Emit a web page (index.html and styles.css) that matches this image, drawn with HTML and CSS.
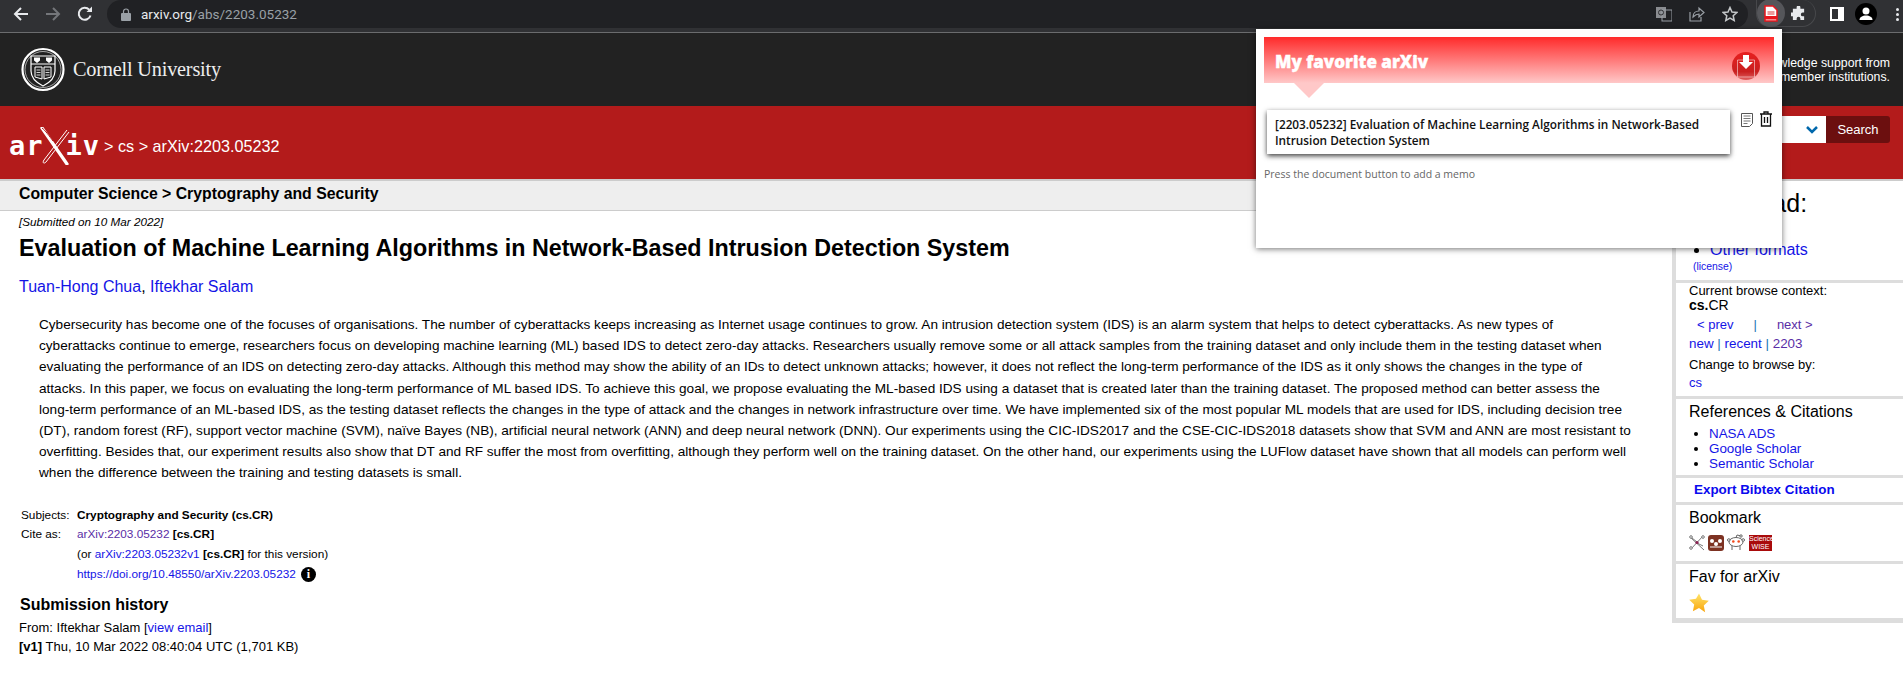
FILE: index.html
```html
<!DOCTYPE html>
<html lang="en">
<head>
    <meta charset="UTF-8">
    <title>[2203.05232] Evaluation of Machine Learning Algorithms in Network-Based Intrusion Detection System</title>
    <link rel="stylesheet" href="styles.css">
</head>
<body>

    <!-- Browser toolbar -->
    <div class="toolbar">
        <svg class="nav-icon" viewBox="0 0 16 16"><path d="M15 8H2M8 2 2 8l6 6" fill="none" stroke="#e8eaed" stroke-width="2"/></svg>
        <svg class="nav-icon" viewBox="0 0 16 16"><path d="M1 8h13M8 2l6 6-6 6" fill="none" stroke="#74767a" stroke-width="2"/></svg>
        <svg class="nav-icon" viewBox="0 0 16 16"><path d="M13.5 9.5A6 6 0 1 1 12.2 3.7" fill="none" stroke="#e8eaed" stroke-width="2"/><path d="M9.5 6H15V.5z" fill="#e8eaed"/></svg>
        <div class="address">
            <svg class="lock" viewBox="0 0 10 13"><path d="M2.5 5V3.5a2.5 2.5 0 0 1 5 0V5" fill="none" stroke="#9aa0a6" stroke-width="1.2"/><rect y="5" width="10" height="8" rx="1" fill="#9aa0a6"/></svg>
            <span class="url">arxiv.org<span class="url-path">/abs/2203.05232</span></span>
            <div class="address-icons">
                <svg class="tool-icon" viewBox="0 0 16 16"><rect x="0" y="1" width="10" height="11" fill="#8a8c90"/><rect x="6" y="4" width="10" height="11" fill="none" stroke="#9aa0a6"/><circle cx="5" cy="6.500" r="2.500" fill="none" stroke="#303134"/></svg>
                <svg class="tool-icon" viewBox="0 0 16 16"><path d="M1 6v9h11v-4" fill="none" stroke="#9aa0a6" stroke-width="1.200"/><path d="M4 11c0-4 3-6 6-6V2l5 4.500-5 4.500V8c-3 0-4 1-6 3z" fill="none" stroke="#9aa0a6" stroke-width="1.200"/></svg>
                <svg class="tool-icon" viewBox="0 0 16 16"><path d="m8 1.500 2 4.500 4.800.500-3.600 3.200 1 4.800L8 12.100 3.800 14.500l1-4.800L1.200 6.500 6 6z" fill="none" stroke="#c4c7c9" stroke-width="1.500"/></svg>
            </div>
        </div>
        <div class="extensions">
            <div class="ext-active">
                <svg class="ext-pdf" viewBox="0 0 14 17"><path d="M1 1h8l4 4v11H1z" fill="#fff" stroke="#e8161d" stroke-width="1.500"/><rect x="3.500" y="6" width="7" height="4" fill="#ee9a9c"/><rect x="1" y="11" width="12" height="3.500" fill="#e8161d"/></svg>
            </div>
            <svg class="puzzle" viewBox="0 0 16 16"><path d="M6 1.500a2 2 0 0 1 4 0V3h4v4h-1.500a2 2 0 0 0 0 4H14v4h-4v-1.500a2 2 0 0 0-4 0V15H2v-4H.5a2 2 0 0 1 0-4H2V3h4z" fill="#e8eaed"/></svg>
        </div>
        <svg class="side-panel" viewBox="0 0 14 14"><rect x="1" y="1" width="12" height="12" fill="none" stroke="#fff" stroke-width="2"/><rect x="8" y="1" width="5" height="12" fill="#fff"/></svg>
        <div class="avatar">
            <svg viewBox="0 0 22 22" width="22" height="22"><circle cx="11" cy="8" r="3.500" fill="#fff"/><path d="M4.500 17c0-3 3-4.500 6.500-4.500s6.500 1.500 6.500 4.500z" fill="#fff"/></svg>
        </div>
        <div class="menu-dots"><i></i><i></i><i></i></div>
    </div>

    <!-- Cornell strip -->
    <div class="cornell">
        <div class="cornell-logo">
            <svg class="seal" viewBox="0 0 44 45">
                <circle cx="22" cy="22.500" r="20.500" fill="none" stroke="#fff" stroke-width="2.200"/>
                <circle cx="22" cy="22.500" r="18" fill="none" stroke="#fff" stroke-width=".6"/>
                <path d="M10 9h24v15c0 7-6 12-12 15-6-3-12-8-12-15z" fill="none" stroke="#fff" stroke-width="1.200"/>
                <path d="M10 17h24" stroke="#fff"/>
                <path d="M13 10.500h6v3l-3 2.500-3-2.500zM25 10.500h6v3l-3 2.500-3-2.500z" fill="#fff"/>
                <path d="M14 20h7v12l-7-2zM30 20h-7v12l7-2z" fill="none" stroke="#fff"/>
                <path d="M15.500 23h4M15.500 25.500h4M15.500 28h4M24.500 23h4M24.500 25.500h4M24.500 28h4" stroke="#fff" stroke-width=".8"/>
            </svg>
            <span class="cornell-name">Cornell University</span>
        </div>
        <p class="support">We gratefully acknowledge support from<br>the Simons Foundation and member institutions.</p>
    </div>

    <!-- Red arXiv strip -->
    <div class="arxiv-bar">
        <div class="arxiv-crumbs">
            <div class="arxiv-logo">
                <span class="logo-text">ar</span>
                <svg class="logo-x" viewBox="0 0 30 38">
                    <path d="M2 1 27 37" stroke="#fff" stroke-width="3.200" stroke-linecap="round"/>
                    <path d="M2 1c3 2 8 9 11 13" stroke="#b31b1b" stroke-width="1" fill="none"/>
                    <path d="M27 3 4 33c-2 3 0 4 2 2L29 5" fill="none" stroke="#fff" stroke-width="1"/>
                </svg>
                <span class="logo-text">iv</span>
            </div>
            <span class="crumb-text">&gt; cs &gt; arXiv:2203.05232</span>
        </div>
        <form class="search">
            <input class="search-input" type="text">
            <div class="search-select">
                <svg viewBox="0 0 12 8" width="12" height="8"><path d="m1 1 5 5 5-5" fill="none" stroke="#0068ac" stroke-width="2.500"/></svg>
            </div>
            <button type="button" class="search-btn">Search</button>
        </form>
    </div>

    <div class="page">
        <div class="main">
            <div class="subject-bar">Computer Science &gt; Cryptography and Security</div>
            <div class="content">
                <div class="dateline">[Submitted on 10 Mar 2022]</div>
                <h1 class="title">Evaluation of Machine Learning Algorithms in Network-Based Intrusion Detection System</h1>
                <div class="authors"><a href="#">Tuan-Hong Chua</a>, <a href="#">Iftekhar Salam</a></div>
                <p class="abstract">Cybersecurity has become one of the focuses of organisations. The number of cyberattacks keeps increasing as Internet usage continues to grow. An intrusion detection system (IDS) is an alarm system that helps to detect cyberattacks. As new types of<br>
                cyberattacks continue to emerge, researchers focus on developing machine learning (ML) based IDS to detect zero-day attacks. Researchers usually remove some or all attack samples from the training dataset and only include them in the testing dataset when<br>
                evaluating the performance of an IDS on detecting zero-day attacks. Although this method may show the ability of an IDs to detect unknown attacks; however, it does not reflect the long-term performance of the IDS as it only shows the changes in the type of<br>
                attacks. In this paper, we focus on evaluating the long-term performance of ML based IDS. To achieve this goal, we propose evaluating the ML-based IDS using a dataset that is created later than the training dataset. The proposed method can better assess the<br>
                long-term performance of an ML-based IDS, as the testing dataset reflects the changes in the type of attack and the changes in network infrastructure over time. We have implemented six of the most popular ML models that are used for IDS, including decision tree<br>
                (DT), random forest (RF), support vector machine (SVM), naïve Bayes (NB), artificial neural network (ANN) and deep neural network (DNN). Our experiments using the CIC-IDS2017 and the CSE-CIC-IDS2018 datasets show that SVM and ANN are most resistant to<br>
                overfitting. Besides that, our experiment results also show that DT and RF suffer the most from overfitting, although they perform well on the training dataset. On the other hand, our experiments using the LUFlow dataset have shown that all models can perform well<br>
                when the difference between the training and testing datasets is small.</p>
                <div class="meta">
                    <span class="meta-label">Subjects:</span>
                    <span><b>Cryptography and Security (cs.CR)</b></span>
                    <span class="meta-label">Cite as:</span>
                    <span><a href="#" class="visited">arXiv:2203.05232</a> <b>[cs.CR]</b></span>
                    <span></span>
                    <span>(or <a href="#">arXiv:2203.05232v1</a> <b>[cs.CR]</b> for this version)</span>
                    <span></span>
                    <span class="doi"><a href="#">https://doi.org/10.48550/arXiv.2203.05232</a> <span class="info-icon">i</span></span>
                </div>
                <h2 class="history-title">Submission history</h2>
                <div class="history">
                    From: Iftekhar Salam [<a href="#">view email</a>]<br>
                    <b>[v1]</b> Thu, 10 Mar 2022 08:40:04 UTC (1,701 KB)
                </div>
            </div>
        </div>

        <div class="sidebar">
            <div class="side-box box-download">
                <h2 class="download-title">Download:</h2>
                <ul class="format-list">
                    <li><a href="#">PDF</a></li>
                    <li><a href="#">Other formats</a></li>
                </ul>
                <div class="license"><a href="#">(license)</a></div>
            </div>
            <div class="side-box box-context">
                <div>Current browse context:</div>
                <div class="context-name"><b>cs.</b>CR</div>
                <div class="prevnext"><a href="#">&lt; prev</a><span class="sep">|</span><a href="#" class="visited">next &gt;</a></div>
                <div class="context-links"><a href="#">new</a> <span class="sep-inline">|</span> <a href="#">recent</a> <span class="sep-inline">|</span> <a href="#" class="visited">2203</a></div>
                <div class="browse-by">Change to browse by:</div>
                <div class="browse-link"><a href="#">cs</a></div>
            </div>
            <div class="side-box box-refs">
                <h3 class="side-title">References &amp; Citations</h3>
                <ul class="ref-list">
                    <li><a href="#">NASA ADS</a></li>
                    <li><a href="#">Google Scholar</a></li>
                    <li><a href="#">Semantic Scholar</a></li>
                </ul>
            </div>
            <div class="side-box box-export"><a href="#">Export Bibtex Citation</a></div>
            <div class="side-box box-bookmark">
                <h3 class="side-title">Bookmark</h3>
                <div class="bookmarks">
                    <svg viewBox="0 0 16 16" width="16" height="16"><path d="M1 2l14 13M14 1 2 14M8 7 3 3M8 8l6 3" stroke="#777" stroke-width="1" fill="none"/><circle cx="2" cy="2" r="1.300" fill="#fff" stroke="#777"/><circle cx="14" cy="2" r="1.300" fill="#fff" stroke="#777"/><circle cx="2" cy="13" r="1.300" fill="#fff" stroke="#777"/><circle cx="8" cy="7.500" r="1.600" fill="#8b2252"/></svg>
                    <svg viewBox="0 0 16 16" width="16" height="16"><rect width="16" height="16" rx="3" fill="#7d3222"/><circle cx="4" cy="6" r="2" fill="#fff"/><circle cx="12" cy="6" r="2" fill="#fff"/><circle cx="8" cy="9" r="2" fill="#fff"/><path d="M2 12h12" stroke="#fff"/></svg>
                    <svg viewBox="0 0 18 17" width="18" height="17"><ellipse cx="9" cy="8" rx="7" ry="4.500" fill="#fff" stroke="#666"/><circle cx="6.300" cy="7.500" r="1.300" fill="#f04a1c"/><circle cx="11.700" cy="7.500" r="1.300" fill="#f04a1c"/><path d="M9 3.500 10 1l3 .7M5 12v4M13 12v4" stroke="#666" fill="none"/><circle cx="14" cy="2" r="1.200" fill="#fff" stroke="#666"/><circle cx="1.800" cy="6" r="1.300" fill="#fff" stroke="#666"/><circle cx="16.200" cy="6" r="1.300" fill="#fff" stroke="#666"/></svg>
                    <span class="sciencewise">Science<br>WISE</span>
                </div>
            </div>
            <div class="side-box box-fav">
                <h3 class="side-title">Fav for arXiv</h3>
                <svg class="fav-star" viewBox="0 0 20 20" width="20" height="20">
                    <defs><linearGradient id="starFill" x1="0" y1="0" x2="0" y2="1"><stop offset="0" stop-color="#ffe46a"/><stop offset="1" stop-color="#f9a50c"/></linearGradient></defs>
                    <path d="m10 .5 3 6.300 6.800.9-5 4.700 1.300 6.800L10 15l-6.100 3.200 1.300-6.800-5-4.700 6.800-.9z" fill="url(#starFill)"/>
                </svg>
            </div>
        </div>
    </div>

    <!-- Extension popup -->
    <div class="popup">
        <div class="popup-head">
            <span class="popup-title">My favorite arXiv</span>
            <div class="popup-save">
                <svg viewBox="0 0 20 24" width="20" height="24"><path d="M1.500 6h17v17h-17z" fill="none" stroke="#fff" stroke-opacity=".5"/><path d="M7 1h6v7h4l-7 7-7-7h4z" fill="#fff"/></svg>
            </div>
        </div>
        <div class="popup-arrow"></div>
        <div class="popup-row">
            <div class="popup-card">[2203.05232] Evaluation of Machine Learning Algorithms in Network-Based Intrusion Detection System</div>
            <svg class="row-doc" viewBox="0 0 12 14" width="12" height="14"><path d="M.5.5h11v10l-3 3h-8z" fill="#fff" stroke="#555"/><path d="M2.500 3h7M2.500 5.500h7M2.500 8h7M2.500 10.500h4" stroke="#777"/></svg>
            <svg class="row-trash" viewBox="0 0 14 16" width="14" height="16"><path d="M1 3h12M5 3V1h4v2M2.500 3v12h9V3M5.500 6v6M8.500 6v6" fill="none" stroke="#111" stroke-width="1.300"/></svg>
        </div>
        <div class="popup-hint">Press the document button to add a memo</div>
    </div>

</body>
</html>
```

FILE: styles.css
```css
body {
    font-family: "Liberation Sans", Arial, sans-serif;
    background-color: #fff;
    color: #000;
    margin: 0;
    padding: 0;
    overflow: hidden;
}

a {
    color: #1414e6;
    text-decoration: none;
}

a.visited {
    color: #5a2ea6;
}

/* browser toolbar */
.toolbar {
    height: 32px;
    display: flex;
    align-items: flex-start;
    background-color: #303134;
    border-bottom: 1px solid #6b6c6e;
    padding: 0 4px 0 13px;
}

.nav-icon {
    width: 16px;
    height: 16px;
    margin: 6px 16px 0 0;
}

.address {
    flex: 1;
    height: 28px;
    margin-left: -2px;
    display: flex;
    align-items: center;
    background-color: #202124;
    border-radius: 14px;
    padding-left: 14px;
    padding-right: 10px;
}

.lock {
    width: 10px;
    height: 13px;
    margin-right: 10px;
}

.url {
    font-family: Roboto, sans-serif;
    font-size: 13.5px;
    color: #e8eaed;
    flex: 1;
}

.url-path {
    color: #9aa0a6;
}

.address-icons {
    display: flex;
    gap: 17px;
}

.tool-icon {
    width: 16px;
    height: 16px;
}

.extensions {
    width: 60px;
    height: 27px;
    margin-left: 8px;
    display: flex;
    align-items: center;
    border: 1px solid #47484b;
    border-top: none;
    border-radius: 0 14px 14px 14px;
    box-sizing: border-box;
}

.ext-active {
    width: 28px;
    height: 28px;
    border-radius: 50%;
    background-color: #55565a;
    display: flex;
    align-items: center;
    justify-content: center;
}

.ext-pdf {
    width: 14px;
    height: 17px;
}

.puzzle {
    width: 15px;
    height: 15px;
    margin-left: 6px;
}

.side-panel {
    width: 14px;
    height: 14px;
    margin: 7px 0 0 14px;
}

.avatar {
    width: 22px;
    height: 22px;
    margin: 3px 0 0 11px;
    background-color: #000;
    border-radius: 50%;
}

.menu-dots {
    margin: 8px 0 0 19px;
    display: flex;
    flex-direction: column;
    gap: 2px;
}

.menu-dots i {
    display: block;
    width: 3px;
    height: 3px;
    border-radius: 50%;
    background-color: #e8eaed;
}

/* cornell strip */
.cornell {
    height: 73px;
    background-color: #222;
    color: #fff;
    display: flex;
    justify-content: space-between;
    align-items: center;
    padding: 0 13px 0 21px;
}

.cornell-logo {
    display: flex;
    align-items: center;
    gap: 8px;
}

.seal {
    width: 44px;
    height: 45px;
}

.cornell-name {
    font-family: "Liberation Serif", serif;
    font-size: 20.3px;
    color: #eee;
    letter-spacing: -0.2px;
}

.support {
    margin: 0;
    font-size: 12.3px;
    line-height: 14px;
    text-align: right;
}

/* red strip */
.arxiv-bar {
    height: 73px;
    background-color: #b31b1b;
    display: flex;
    justify-content: space-between;
    align-items: flex-start;
    padding: 0 13px 0 9px;
}

.arxiv-crumbs {
    display: flex;
    align-items: center;
    margin-top: 21px;
}

.arxiv-logo {
    display: flex;
    align-items: center;
    width: 95px;
    height: 38px;
}

.logo-text {
    font-family: "DejaVu Sans Mono", monospace;
    font-size: 27px;
    font-weight: bold;
    letter-spacing: 1px;
    line-height: 38px;
    color: #fff;
}

.logo-x {
    width: 30px;
    height: 38px;
    flex-shrink: 0;
    margin: 0 -4px;
}

.crumb-text {
    font-size: 16.2px;
    color: #fff;
}

.search {
    display: flex;
    margin-top: 10px;
    height: 27px;
}

.search-input {
    width: 100px;
    border: none;
    padding: 0;
    background-color: #fff;
}

.search-select {
    width: 100px;
    background-color: #fff;
    display: flex;
    align-items: center;
    justify-content: flex-end;
    padding-right: 8px;
}

.search-btn {
    width: 64px;
    border: none;
    padding: 0;
    border-radius: 0 3px 3px 0;
    background-color: #6c0f0f;
    color: #fff;
    font-family: "Liberation Sans", Arial, sans-serif;
    font-size: 13px;
}

/* page body */
.page {
    display: flex;
    border-top: 2px solid #ccc;
}

.main {
    flex: 1;
    min-width: 0;
}

.subject-bar {
    height: 29px;
    line-height: 26px;
    padding-left: 19px;
    background-color: #eee;
    border-bottom: 1px solid #ccc;
    font-size: 15.8px;
    font-weight: bold;
}

.content {
    padding: 1px 32px 0 19px;
}

.dateline {
    font-size: 11.7px;
    font-style: italic;
    line-height: 20px;
}

.title {
    margin: 0;
    font-size: 23.3px;
    line-height: 32px;
    font-weight: bold;
}

.authors {
    margin-top: 11px;
    font-size: 16px;
    line-height: 24px;
}

.abstract {
    margin: 15px 0 0 20px;
    font-size: 13.6px;
    line-height: 21.2px;
    white-space: nowrap;
}

.meta {
    margin-top: 22px;
    margin-left: 2px;
    display: grid;
    grid-template-columns: 56px 1fr;
    font-size: 11.8px;
    line-height: 19.7px;
}

.doi {
    display: flex;
    align-items: center;
    gap: 5px;
}

.info-icon {
    width: 15px;
    height: 15px;
    border-radius: 50%;
    background-color: #000;
    color: #fff;
    font-family: "Liberation Serif", serif;
    font-weight: bold;
    font-size: 12px;
    line-height: 15px;
    text-align: center;
}

.history-title {
    margin: 11px 0 0 1px;
    font-size: 16px;
    line-height: 20px;
}

.history {
    margin-top: 3px;
    font-size: 13px;
    line-height: 19px;
}

/* sidebar */
.sidebar {
    width: 227px;
    flex-shrink: 0;
    border-left: 4px solid #ddd;
    border-bottom: 5px solid #ddd;
    align-self: flex-start;
    font-size: 13px;
}

.side-box {
    box-sizing: border-box;
    padding-left: 13px;
    border-bottom: 3px solid #ddd;
}

.box-fav {
    border-bottom: none;
    height: 54px;
}

.box-download {
    height: 102px;
    padding-top: 7px;
}

.download-title {
    margin: 0;
    font-size: 25px;
    font-weight: normal;
    line-height: 30px;
}

.format-list {
    margin: 2px 0 0;
    padding-left: 21px;
    font-size: 16px;
    line-height: 20px;
}

.license {
    font-size: 10.4px;
    line-height: 14px;
    margin: 0 0 0 4px;
}

.box-context {
    height: 116px;
    line-height: 15px;
    padding-top: 0;
}

.context-name {
    font-size: 14px;
}

.prevnext {
    margin: 3px 0 0 8px;
    font-size: 13px;
    line-height: 17px;
}

.prevnext .sep {
    color: #1976b5;
    margin: 0 20px;
}

.context-links {
    margin-top: 2px;
    font-size: 13.4px;
    line-height: 18px;
}

.sep-inline {
    color: #1976b5;
}

.browse-by {
    margin-top: 3px;
    line-height: 18px;
}

.browse-link {
    line-height: 18px;
}

.side-title {
    margin: 0;
    font-size: 16px;
    font-weight: normal;
    line-height: 22px;
}

.box-refs {
    height: 79px;
    padding-top: 2px;
}

.ref-list {
    margin: 3px 0 0;
    padding-left: 20px;
    font-size: 13.4px;
    line-height: 15px;
}

.box-export {
    height: 27px;
    padding-left: 18px;
    font-size: 13.4px;
    font-weight: bold;
    line-height: 24px;
}

.box-export a {
    color: #0a0aee;
}

.box-bookmark {
    height: 59px;
    padding-top: 2px;
}

.bookmarks {
    display: flex;
    align-items: center;
    gap: 3px;
    margin-top: 5px;
}

.sciencewise {
    width: 23px;
    height: 16px;
    background-color: #a90b0b;
    color: #fff;
    font-size: 7px;
    line-height: 8px;
    text-align: center;
    margin-left: 1px;
}

.box-fav {
    padding-top: 2px;
}

.fav-star {
    display: block;
    margin-top: 5px;
}

/* extension popup */
.popup {
    position: absolute;
    left: 1256px;
    top: 29px;
    width: 526px;
    height: 219px;
    box-sizing: border-box;
    padding: 8px;
    background-color: #fff;
    box-shadow: 0 1px 6px rgba(0, 0, 0, 0.55);
    font-family: "Open Sans", sans-serif;
}

.popup-head {
    height: 46px;
    display: flex;
    justify-content: space-between;
    align-items: center;
    padding: 0 14px 0 11px;
    background: linear-gradient(#ff2a2a, #ffc8c8);
}

.popup-title {
    font-size: 17px;
    font-weight: 800;
    color: #fff;
    margin-top: 2px;
    -webkit-text-stroke: 0.4px #fff;
}

.popup-save {
    width: 28px;
    height: 28px;
    margin-top: 12px;
    border-radius: 50%;
    background: linear-gradient(#e81f1f, #c92020 70%, #e06060);
    display: flex;
    align-items: center;
    justify-content: center;
}

.popup-arrow {
    width: 0;
    height: 0;
    margin-left: 30px;
    border-left: 15px solid transparent;
    border-right: 15px solid transparent;
    border-top: 15px solid #ffc8c8;
}

.popup-row {
    display: flex;
    align-items: flex-start;
    margin: 12px 0 0 3px;
}

.popup-card {
    width: 463px;
    height: 44px;
    flex-shrink: 0;
    box-sizing: border-box;
    padding: 6px 8px;
    font-size: 11.8px;
    font-weight: 600;
    line-height: 16px;
    color: #111;
    background-color: #fff;
    box-shadow: 0 2px 5px rgba(0, 0, 0, 0.75);
}

.row-doc {
    margin: 3px 0 0 11px;
    flex-shrink: 0;
}

.row-trash {
    margin: 1px 0 0 6px;
    flex-shrink: 0;
}

.popup-hint {
    margin-top: 12px;
    font-size: 10.5px;
    line-height: 16px;
    color: #666;
}
```
